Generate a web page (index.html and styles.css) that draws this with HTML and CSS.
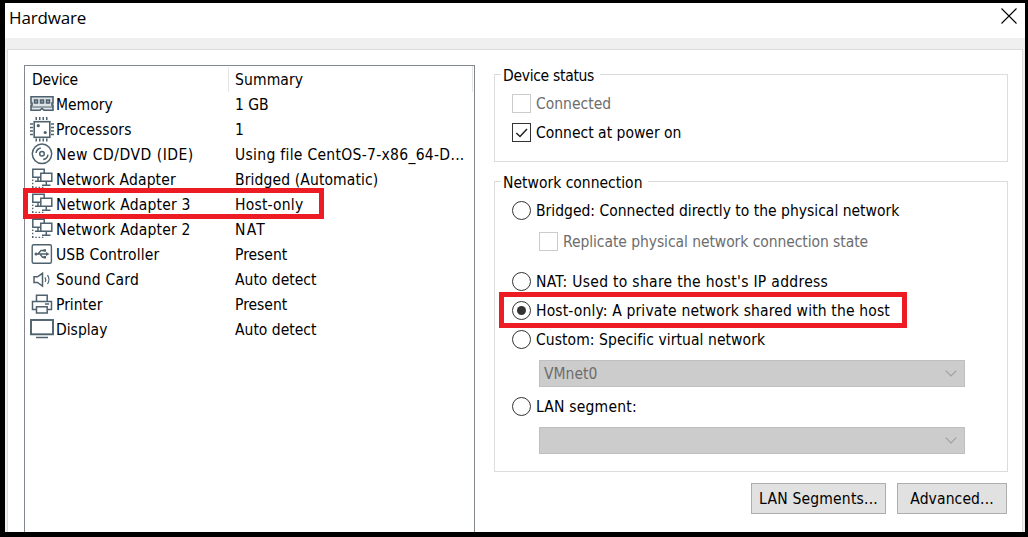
FILE: index.html
```html
<!DOCTYPE html>
<html lang="en">
<head>
<meta charset="utf-8">
<title>Hardware</title>
<link rel="stylesheet" href="styles.css">
</head>
<body>
<svg class="defs" width="0" height="0">
  <defs>
    <g id="net" fill="none" stroke="#4e616d" stroke-width="1.5">
      <path d="M2.8 2.3H14.2V10.3H2.8ZM8 10.3V14.3M5 14.3H10.8"/>
      <path d="M2.7 12.5V21" stroke-width="1.3" stroke-dasharray="1.5 1.8"/>
      <path d="M2 20.3H15" stroke-width="1.3" stroke-dasharray="1.5 1.8"/>
      <path d="M10.8 6.3H21.8V14.3H10.8Z" fill="#fff"/>
      <path d="M16.3 14.3V18M12 18.2H20.5"/>
    </g>
  </defs>
</svg>
<div class="window">
  <header class="titlebar">
    <h1 class="title">Hardware</h1>
    <svg class="close" width="16" height="16" viewBox="0 0 16 16"><path d="M.5 .5L15.5 15.5M15.5 .5L.5 15.5" stroke="#000" stroke-width="1.1"/></svg>
  </header>
  <main class="panel">
    <section class="devices">
      <div class="row head"><span class="name snug">Device</span><span class="summary t1">Summary</span></div>
      <div class="row"><svg class="icon" viewBox="0 0 24 25"><path d="M1 4.8H23V11H22V13.2H23V18.2H14L12 16.5L10 18.2H1V13.2H2V11H1Z" fill="#dfe4e8" stroke="#4e616d" stroke-width="1.6"/><path d="M1 15H23" stroke="#4e616d"/><path d="M4.5 8H7.5V11H4.5ZM10.5 8H13.5V11H10.5ZM16.5 8H19.5V11H16.5Z" fill="#aab5bd" stroke="#4e616d" stroke-width="1.5"/></svg><span class="name">Memory</span><span class="summary">1 GB</span></div>
      <div class="row"><svg class="icon" viewBox="0 0 24 25"><rect x="4.2" y="4.7" width="15.6" height="15.6" fill="none" stroke="#4e616d" stroke-width="1.6"/><path d="M5.5 1.5H19M5.5 23H19" stroke="#4e616d" stroke-width="3" stroke-dasharray="1.5 2"/><path d="M1.5 6.3V20M22.5 6.3V20" stroke="#4e616d" stroke-width="3" stroke-dasharray="1.5 2"/><circle cx="8.3" cy="8.7" r="1.6" fill="#4e616d"/><circle cx="15.2" cy="15.5" r="1.6" fill="#4e616d"/></svg><span class="name t1">Processors</span><span class="summary">1</span></div>
      <div class="row"><svg class="icon" viewBox="0 0 24 25"><g fill="none" stroke="#4e616d" stroke-width="1.5"><circle cx="12" cy="11.8" r="9.7"/><circle cx="12" cy="11.8" r="2.3"/><path d="M6 11A6 6 0 0 1 10.8 6M13.2 17.6A6 6 0 0 0 18 12.6"/></g></svg><span class="name t5">New CD/DVD (IDE)</span><span class="summary t3">Using file CentOS-7-x86_64-D...</span></div>
      <div class="row"><svg class="icon" viewBox="0 0 24 25"><use href="#net"/></svg><span class="name t1">Network Adapter</span><span class="summary t1">Bridged (Automatic)</span></div>
      <div class="row"><svg class="icon" viewBox="0 0 24 25"><use href="#net"/></svg><span class="name t2">Network Adapter 3</span><span class="summary t2">Host-only</span><i class="mark mark-device"></i></div>
      <div class="row"><svg class="icon" viewBox="0 0 24 25"><use href="#net"/></svg><span class="name t2">Network Adapter 2</span><span class="summary t12">NAT</span></div>
      <div class="row"><svg class="icon" viewBox="0 0 24 25"><g fill="none" stroke="#4e616d" stroke-width="1.4"><rect x="2.2" y="2.7" width="19.2" height="18.6" rx="1.5"/><path d="M5.5 12H17M8 12L11 8.5H14M10 12L12.5 15.2H14"/></g><path d="M16 10L19.5 12L16 14Z" fill="#4e616d"/><circle cx="6" cy="12" r="1.5" fill="#4e616d"/><path d="M13.5 7.2H16V9.8H13.5ZM13.5 14H16V16.5H13.5Z" fill="#4e616d"/></svg><span class="name t1">USB Controller</span><span class="summary">Present</span></div>
      <div class="row"><svg class="icon" viewBox="0 0 24 25"><g fill="none" stroke="#4e616d" stroke-width="1.5"><path d="M4 9.8H7.5L12.5 6.3V19L7.5 15.5H4Z"/><path d="M15 10.3Q16.5 12.6 15 15M17.5 8.2Q20.4 12.6 17.5 17" stroke-width="1.2"/></g></svg><span class="name t2">Sound Card</span><span class="summary">Auto detect</span></div>
      <div class="row"><svg class="icon" viewBox="0 0 24 25"><g fill="none" stroke="#4e616d" stroke-width="1.5"><path d="M6.5 9.2V3.3H17.2V9.2M6 17.5H2.5V9.5H21.5V17.5H18"/><path d="M6.5 14.8H17.2V21H6.5ZM15 12H19"/></g></svg><span class="name">Printer</span><span class="summary">Present</span></div>
      <div class="row"><svg class="icon" viewBox="0 0 24 25"><rect x="1" y="3" width="22" height="14.3" fill="none" stroke="#4e616d" stroke-width="1.9"/><path d="M6 20.5H18" stroke="#4e616d" stroke-width="1.5"/></svg><span class="name">Display</span><span class="summary">Auto detect</span></div>
    </section>
    <section class="settings">
      <div class="group status">
        <h2 class="legend snug">Device status</h2>
        <label class="option off"><i class="box"></i><span>Connected</span></label>
        <label class="option"><i class="box"><svg width="17" height="17" viewBox="0 0 17 17"><path d="M3.3 9L7 12.5L14 5" fill="none" stroke="#222" stroke-width="1.5"/></svg></i><span>Connect at power on</span></label>
      </div>
      <div class="group network">
        <h2 class="legend">Network connection</h2>
        <label class="option"><i class="radio"></i><span>Bridged: Connected directly to the physical network</span></label>
        <label class="option off sub"><i class="box"></i><span class="tight">Replicate physical network connection state</span></label>
        <label class="option nat"><i class="radio"></i><span class="t3">NAT: Used to share the host's IP address</span></label>
        <label class="option"><i class="radio on"></i><span class="t15">Host-only: A private network shared with the host</span><i class="mark mark-option"></i></label>
        <label class="option"><i class="radio"></i><span class="t05">Custom: Specific virtual network</span></label>
        <div class="select"><span>VMnet0</span><svg width="12" height="7" viewBox="0 0 12 7"><path d="M.7 .7L6 6L11.3 .7" fill="none" stroke="#a0a0a0" stroke-width="1.2"/></svg></div>
        <label class="option lan"><i class="radio"></i><span class="t2">LAN segment:</span></label>
        <div class="select"><span></span><svg width="12" height="7" viewBox="0 0 12 7"><path d="M.7 .7L6 6L11.3 .7" fill="none" stroke="#a0a0a0" stroke-width="1.2"/></svg></div>
      </div>
      <div class="actions"><button class="btn lan-btn t2">LAN Segments...</button><button class="btn adv-btn t1">Advanced...</button></div>
    </section>
  </main>
</div>
</body>
</html>
```
FILE: styles.css
```css
* { box-sizing: border-box; }
body {
  margin: 0;
  height: 537px;
  padding: 3px 3px 5px 5px;
  background: #000;
  color: #000;
  font: 15.5px/25px "DejaVu Sans Condensed", "DejaVu Sans", sans-serif;
  font-stretch: condensed;
  font-variant-ligatures: none;
  white-space: nowrap;
  overflow: hidden;
}
.defs { position: absolute; }
.window { height: 529px; display: flex; flex-direction: column; background: #f0f0f0; overflow: hidden; }
.titlebar { height: 35px; flex: none; display: flex; justify-content: space-between; padding: 5px 8px 0 4px; background: #fff; }
.title { margin: 0; font: 17px/20px "Open Sans", "Noto Sans", sans-serif; letter-spacing: -.15px; }
.close { display: block; }
.panel { flex: 1; margin: 11px 2px 0; padding: 15px 14px 0 16px; display: flex; gap: 19px; border: 1px solid #dcdcdc; border-bottom: 0; background: #fff; }
.devices { width: 451px; border: 1px solid #828790; border-bottom: 0; }
.row { position: relative; height: 25px; display: flex; padding-left: 5px; }
.icon { width: 24px; height: 25px; margin-right: 2px; flex: none; overflow: visible; }
.name { width: 179px; }
.name, .summary { padding-top: 1px; }
.head { height: 26px; margin-right: 1px; padding: 1px 0 0 7px; border-right: 1px solid #e5e5e5; }
.head .name { width: 197px; border-right: 1px solid #e5e5e5; margin-right: 6px; }
.mark { position: absolute; border: 5px solid #ed1c24; }
.mark-device { left: -2px; top: -4px; width: 301px; height: 31px; }
.mark-option { left: -13px; top: -6px; width: 408px; height: 36px; }
.settings { width: 514px; padding-top: 9px; }
.group { border: 1px solid #dcdcdc; padding-left: 17px; }
.status { height: 88px; }
.network { height: 291px; margin-top: 19px; }
.legend { width: max-content; height: 25px; margin: -13px 0 4px -11px; padding: 2px 6px 0 2px; background: #fff; font: inherit; }
.option { position: relative; display: flex; align-items: center; gap: 5px; height: 25px; margin-bottom: 4px; }
.option > span { padding-top: 2px; }
.box { width: 19px; height: 19px; border: 1px solid #333; background: #fff; }
.box svg { display: block; }
.radio { width: 19px; height: 19px; border: 1px solid #333; border-radius: 50%; background: #fff; }
.on { padding: 4px; background: #333 content-box; }
.off { color: #6d6d6d; }
.off .box { border-color: #ccc; }
.sub { margin: 6px 0 15px 27px; }
.select { width: 426px; height: 27px; margin: 8px 0 7px 27px; padding: 0 7px 0 4px; display: flex; justify-content: space-between; align-items: center; border: 1px solid #bfbfbf; background: #ccc; color: #6d6d6d; }
.select span { padding-top: 2px; }
.lan { margin-bottom: 8px; }
.actions { display: flex; justify-content: flex-end; gap: 11px; margin: 11px 1px 0 0; }
.btn { height: 31px; padding: 1px 0 0; border: 1px solid #adadad; background: #e1e1e1; color: #000; font: inherit; }
.lan-btn { width: 135px; }
.adv-btn { width: 110px; }

/* Tracking steps */
.snug { letter-spacing: -.3px; }
.tight { letter-spacing: -.07px; }
.t05 { letter-spacing: .07px; }
.t1 { letter-spacing: .12px; }
.t15 { letter-spacing: .15px; }
.t2 { letter-spacing: .2px; }
.t3 { letter-spacing: .3px; }
.t5 { letter-spacing: .5px; }
.t12 { letter-spacing: 1.2px; }
```
